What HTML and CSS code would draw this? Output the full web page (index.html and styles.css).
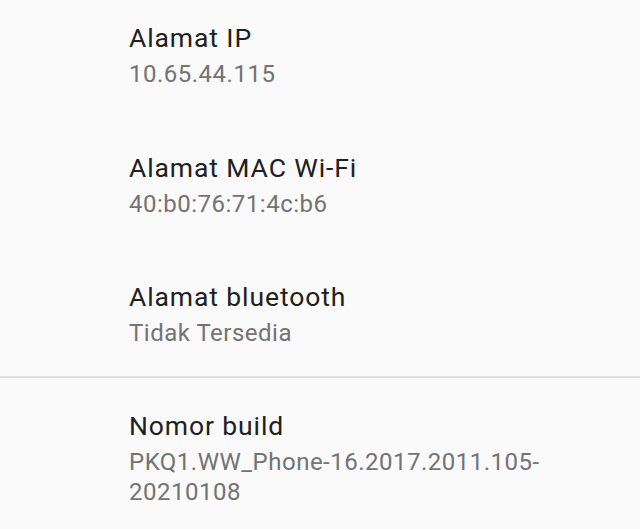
FILE: index.html
```html
<!DOCTYPE html>
<html>
<head>
<meta charset="utf-8">
<link rel="stylesheet" href="styles.css">
</head>
<body>
<div class="group">
  <div class="item">
    <div class="title">Alamat IP</div>
    <div class="summary">10.65.44.115</div>
  </div>
  <div class="item">
    <div class="title">Alamat MAC Wi-Fi</div>
    <div class="summary">40:b0:76:71:4c:b6</div>
  </div>
  <div class="item">
    <div class="title">Alamat bluetooth</div>
    <div class="summary">Tidak Tersedia</div>
  </div>
</div>
<div class="divider"></div>
<div class="group second">
  <div class="item">
    <div class="title">Nomor build</div>
    <div class="summary">PKQ1.WW_Phone-16.2017.2011.105-<br>20210108</div>
  </div>
</div>
</body>
</html>
```
FILE: styles.css
```css
html, body {
  margin: 0;
  padding: 0;
  background: #fafafa;
  font-family: Roboto, "Noto Sans", sans-serif;
}
body {
  width: 640px;
  height: 529px;
  overflow: hidden;
}
.group {
  display: flex;
  flex-direction: column;
  gap: 12.5px;
}
.item {
  padding: 21px 0 27.5px 129px;
}
.second .item {
  padding-top: 31px;
}
.title {
  font-size: 26.5px;
  line-height: 34px;
  letter-spacing: 0.9px;
  color: #202020;
  margin-bottom: 5px;
}
.summary {
  font-size: 24px;
  line-height: 29.5px;
  letter-spacing: 0.5px;
  color: #737373;
}
.divider {
  height: 2px;
  background: #e0e0e0;
}
```
